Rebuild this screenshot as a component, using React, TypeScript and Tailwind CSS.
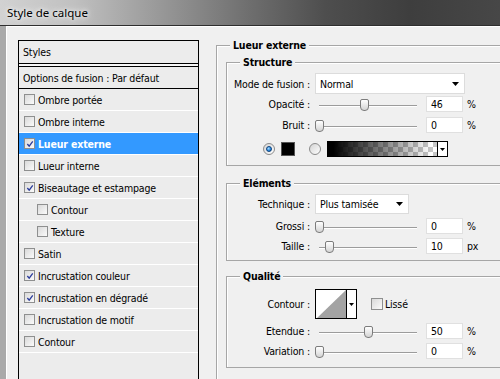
import React from 'react';

// Layer style dialog (Photoshop, French UI, Vista chrome)

type StyleRow = {
  label: string;
  checked: boolean;
  active?: boolean;
  sub?: boolean;
};

const styleRows: StyleRow[] = [
  { label: 'Ombre portée', checked: false },
  { label: 'Ombre interne', checked: false },
  { label: 'Lueur externe', checked: true, active: true },
  { label: 'Lueur interne', checked: false },
  { label: 'Biseautage et estampage', checked: true },
  { label: 'Contour', checked: false, sub: true },
  { label: 'Texture', checked: false, sub: true },
  { label: 'Satin', checked: false },
  { label: 'Incrustation couleur', checked: true },
  { label: 'Incrustation en dégradé', checked: true },
  { label: 'Incrustation de motif', checked: false },
  { label: 'Contour', checked: false },
];

function Check({ checked, className = 'h-[11px] w-[11px]' }: { checked: boolean; className?: string }) {
  return (
    <span
      className={`flex shrink-0 items-center justify-center border border-[#8e8f8f] bg-linear-to-br from-[#d9d9d9] to-[#fbfbfb] ${className}`}
    >
      {checked && (
        <svg viewBox="0 0 9 9" className="h-[8px] w-[8px]">
          <path d="M1.5 4.5 L3.6 7 L7.6 1.6" fill="none" stroke="#2c3d9c" strokeWidth="1.5" />
        </svg>
      )}
    </span>
  );
}

function Radio({ on }: { on?: boolean }) {
  return (
    <span className="flex h-[12px] w-[12px] shrink-0 items-center justify-center rounded-full border border-[#8b8b8b] bg-linear-to-br from-[#d4d4d4] to-white">
      {on && (
        <span className="h-[6px] w-[6px] rounded-full border border-[#0b3f7a] bg-[radial-gradient(circle_at_35%_35%,#a6dcff,#2a8ae0_60%,#0c4f9c)]" />
      )}
    </span>
  );
}

function Arrow() {
  return (
    <svg viewBox="0 0 7 4" className="h-[4px] w-[7px] shrink-0">
      <path d="M0 0 H7 L3.5 4 Z" fill="#000" />
    </svg>
  );
}

function Field({ label, className = '', children }: { label: string; className?: string; children: React.ReactNode }) {
  return (
    <div className={`flex items-center ${className}`}>
      <span className="w-[83px] shrink-0 text-right">{label}</span>
      {children}
    </div>
  );
}

function Slider({ pos }: { pos: number }) {
  return (
    <div className="relative ml-[5px] h-full w-[106px] shrink-0">
      <div className="absolute left-[4px] right-[4px] top-[9px] h-[2px] border-t border-[#9c9c9c] bg-white" />
      <div
        className="absolute top-[3px] h-[12px] w-[9px] rounded-t-[2px] rounded-b-[4px] border border-[#7c7c7c] bg-linear-to-b from-white to-[#d4d4d4]"
        style={{ left: 4 + pos * 0.98 - 4.5 }}
      />
    </div>
  );
}

function NumBox({ value, unit }: { value: string; unit: string }) {
  return (
    <>
      <div className="ml-[5px] flex h-[16px] w-[37px] shrink-0 items-center border border-[#e0e0e0] bg-white pl-[4px]">
        {value}
      </div>
      <span className="ml-[4px]">{unit}</span>
    </>
  );
}

function Group({ title, className = '', children }: { title: string; className?: string; children: React.ReactNode }) {
  return (
    <fieldset className={`border border-[#a6a6a6] shadow-[inset_1px_1px_0_#fff] ${className}`}>
      <legend className="ml-[13px] bg-[#f0f0f0] px-[3px] font-bold leading-[14px]">{title}</legend>
      {children}
    </fieldset>
  );
}

export default function App() {
  return (
    <div className="flex h-[379px] w-[500px] flex-col overflow-hidden bg-[#f0f0f0] font-['DejaVu_Sans_Condensed','Liberation_Sans',sans-serif] text-[10.5px] leading-[14px] tracking-[-0.15px] text-black">
      {/* Title bar */}
      <div className="flex h-[26px] shrink-0 items-center border-b border-[#2e2e2e] bg-[linear-gradient(90deg,#d2d2d2_0%,#c0c0c0_15%,#9d9d9d_30%,#6e6e6e_50%,#4e4e4e_65%,#3e3e3e_82%,#474747_100%)] pl-[7px]">
        <span className="font-['Noto_Sans','Liberation_Sans',sans-serif] text-[11.5px] tracking-normal [text-shadow:0_0_8px_#fff,0_0_4px_#fff]">
          Style de calque
        </span>
      </div>

      <div className="flex min-h-0 flex-1">
        {/* Window frame */}
        <div className="w-[7px] shrink-0 border-r border-white bg-[#a9a9a9]" />

        <div className="flex min-w-0 flex-1 items-start border-t border-white pt-[11px]">
          {/* Styles list */}
          <div className="mt-[2px] ml-[11px] flex h-[360px] w-[181px] shrink-0 flex-col border-x border-t border-black bg-[#ececec]">
            <div className="flex h-[23px] shrink-0 items-center border-b border-black pl-[4px]">Styles</div>
            <div className="h-[2px] shrink-0 bg-[#f6f6f6]" />
            <div className="flex h-[23px] shrink-0 items-center border-y border-black pl-[4px]">
              Options de fusion : Par défaut
            </div>
            {styleRows.map((row, i) => (
              <div
                key={i}
                className={`flex h-[22px] shrink-0 items-center gap-[3px] border-b border-white ${
                  row.sub ? 'pl-[18px]' : 'pl-[5px]'
                } ${row.active ? 'bg-[#3399ff] font-bold text-white' : ''}`}
              >
                <Check checked={row.checked} />
                {row.label}
              </div>
            ))}
          </div>

          {/* Settings */}
          <Group title="Lueur externe" className="ml-[17px] w-[300px] shrink-0 pb-[20px]">
            <Group title="Structure" className="mt-[3px] ml-[9px] w-[285px] pb-[8px]">
              <Field label="Mode de fusion :" className="mt-[4px] h-[21px]">
                <div className="ml-[5px] flex h-full w-[150px] items-center justify-between border border-[#dcdcdc] bg-white pl-[4px] pr-[5px]">
                  Normal
                  <Arrow />
                </div>
              </Field>
              <Field label="Opacité :" className="mt-[2px] h-[16px]">
                <Slider pos={46} />
                <NumBox value="46" unit="%" />
              </Field>
              <Field label="Bruit :" className="mt-[5px] h-[16px]">
                <Slider pos={0} />
                <NumBox value="0" unit="%" />
              </Field>
              <div className="mt-[8px] flex h-[16px] items-center pl-[36px]">
                <Radio on />
                <span className="ml-[6px] h-[14px] w-[14px] border border-[#555] bg-black" />
                <span className="ml-[14px]">
                  <Radio />
                </span>
                <div className="ml-[6px] flex h-[16px] w-[121px] border border-black">
                  <div className="flex-1 bg-[repeating-conic-gradient(#c6c6c6_0_25%,#ffffff_0_50%)] bg-[length:10px_10px]">
                    <div className="h-full bg-linear-to-r from-black from-5% to-transparent to-95%" />
                  </div>
                  <div className="flex w-[10px] items-center justify-center border-l border-black bg-white">
                    <svg viewBox="0 0 5 3" className="h-[3px] w-[5px]">
                      <path d="M0 0 H5 L2.5 3 Z" fill="#000" />
                    </svg>
                  </div>
                </div>
              </div>
            </Group>

            <Group title="Eléments" className="mt-[10px] ml-[9px] w-[285px] pb-[6px]">
              <Field label="Technique :" className="mt-[4px] h-[20px]">
                <div className="ml-[5px] flex h-full w-[94px] items-center justify-between border border-[#dcdcdc] bg-white pl-[4px] pr-[5px]">
                  Plus tamisée
                  <Arrow />
                </div>
              </Field>
              <Field label="Grossi :" className="mt-[4px] h-[16px]">
                <Slider pos={0} />
                <NumBox value="0" unit="%" />
              </Field>
              <Field label="Taille :" className="mt-[4px] h-[16px]">
                <Slider pos={11} />
                <NumBox value="10" unit="px" />
              </Field>
            </Group>

            <Group title="Qualité" className="mt-[8px] ml-[9px] w-[285px] pb-[8px]">
              <Field label="Contour :" className="mt-[6px] h-[30px]">
                <div className="ml-[5px] flex h-full w-[42px] border border-black bg-white">
                  <svg viewBox="0 0 30 28" className="h-full w-[30px]">
                    <path d="M1 28 L30 0 L30 28 Z" fill="#a3a3a3" />
                  </svg>
                  <div className="flex flex-1 items-center justify-center border-l border-black">
                    <svg viewBox="0 0 5 3" className="h-[3px] w-[5px]">
                      <path d="M0 0 H5 L2.5 3 Z" fill="#000" />
                    </svg>
                  </div>
                </div>
                <span className="ml-[14px]">
                  <Check checked={false} className="h-[12px] w-[12px]" />
                </span>
                <span className="ml-[2px]">Lissé</span>
              </Field>
              <Field label="Etendue :" className="mt-[4px] h-[16px]">
                <Slider pos={50} />
                <NumBox value="50" unit="%" />
              </Field>
              <Field label="Variation :" className="mt-[4px] h-[16px]">
                <Slider pos={0} />
                <NumBox value="0" unit="%" />
              </Field>
            </Group>
          </Group>
        </div>
      </div>
    </div>
  );
}
